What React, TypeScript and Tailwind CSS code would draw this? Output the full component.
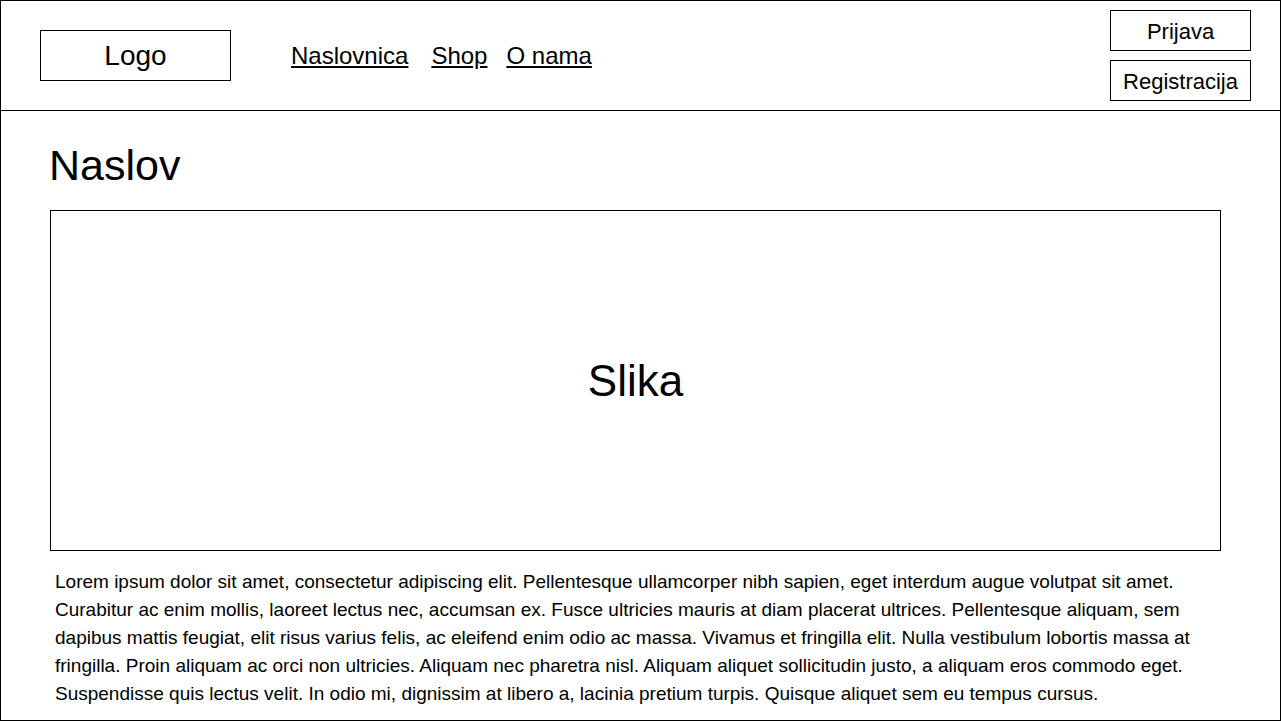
const LOREM =
  "Lorem ipsum dolor sit amet, consectetur adipiscing elit. Pellentesque ullamcorper nibh sapien, eget interdum augue volutpat sit amet. Curabitur ac enim mollis, laoreet lectus nec, accumsan ex. Fusce ultricies mauris at diam placerat ultrices. Pellentesque aliquam, sem dapibus mattis feugiat, elit risus varius felis, ac eleifend enim odio ac massa. Vivamus et fringilla elit. Nulla vestibulum lobortis massa at fringilla. Proin aliquam ac orci non ultricies. Aliquam nec pharetra nisl. Aliquam aliquet sollicitudin justo, a aliquam eros commodo eget. Suspendisse quis lectus velit. In odio mi, dignissim at libero a, lacinia pretium turpis. Quisque aliquet sem eu tempus cursus.";

function Header() {
  return (
    <header className="flex h-[110px] items-center border-b border-black">
      <div className="ml-[39px] flex h-[51px] w-[191px] items-center justify-center border border-black text-[28px]">
        Logo
      </div>
      <nav className="ml-[60px] flex items-center text-[24px]">
        <a href="#" className="underline">Naslovnica</a>
        <a href="#" className="ml-[23px] underline">Shop</a>
        <a href="#" className="ml-[19px] underline">O nama</a>
      </nav>
      <div className="ml-auto mr-[29px] flex flex-col gap-[9px] text-[22px]">
        <button className="flex h-[41px] w-[141px] items-center justify-center border border-black pt-[2px]">Prijava</button>
        <button className="flex h-[41px] w-[141px] items-center justify-center border border-black pt-[2px]">Registracija</button>
      </div>
    </header>
  );
}

export default function App() {
  return (
    <div className="flex h-[721px] w-[1281px] flex-col overflow-hidden border border-black bg-white font-['Liberation_Sans',Arial,sans-serif] text-black">
      <Header />
      <main className="flex flex-col">
        <h1 className="ml-[48px] mt-[33px] text-[43px] leading-[43px]">Naslov</h1>
        <div className="ml-[49px] mt-[23px] flex h-[341px] w-[1171px] items-center justify-center border border-black text-[44px]">
          Slika
        </div>
        <p className="ml-[54px] mt-[17px] w-[1165px] text-[19px] leading-[28px]">{LOREM}</p>
      </main>
    </div>
  );
}
